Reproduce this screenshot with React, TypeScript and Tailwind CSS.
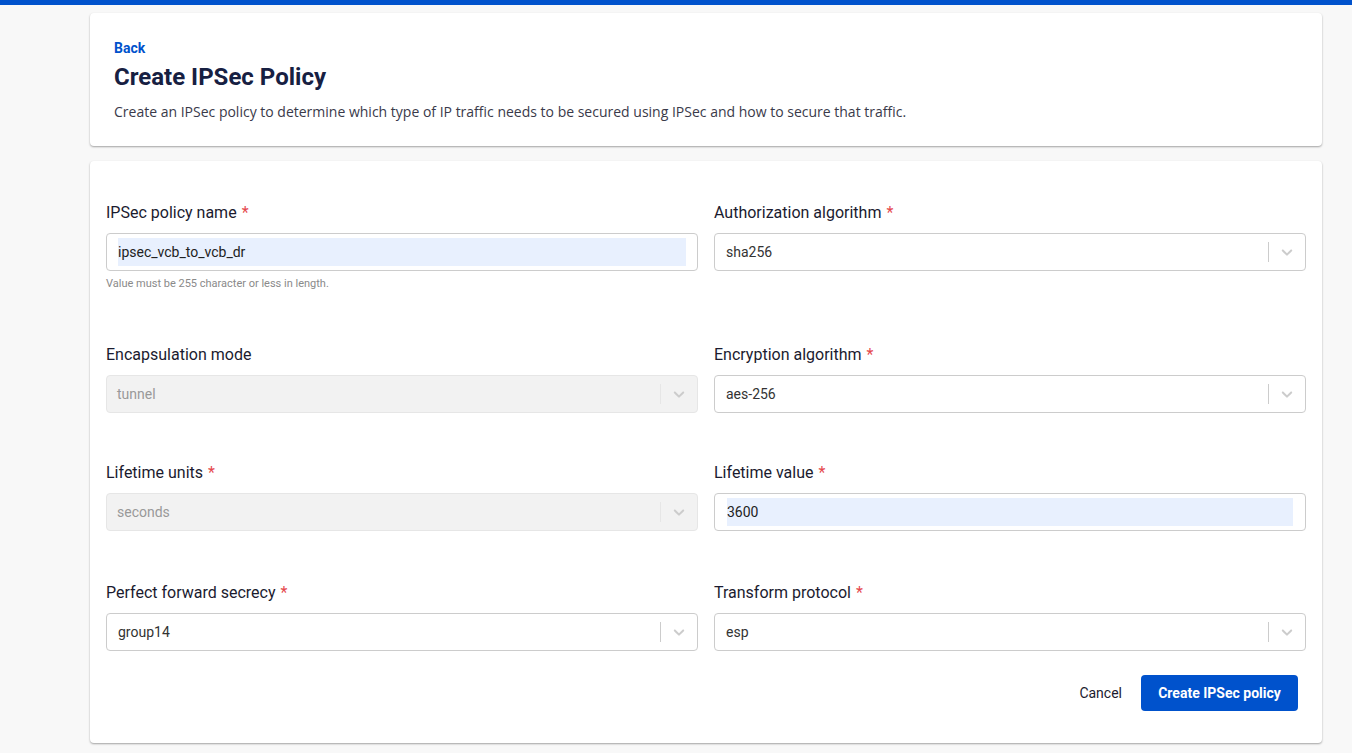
import React from "react";

const font = { roboto: "font-['Roboto','Liberation_Sans',sans-serif]" };

function Chevron() {
  return (
    <svg viewBox="0 0 20 20" className="h-[18px] w-[18px]" fill="#cccccc">
      <path d="M4.516 7.548c.436-.446 1.043-.481 1.576 0L10 11.295l3.908-3.747c.533-.481 1.141-.446 1.574 0 .436.445.408 1.197 0 1.615-.406.418-4.695 4.502-4.695 4.502a1.095 1.095 0 0 1-1.576 0S4.924 9.581 4.516 9.163c-.409-.418-.436-1.17 0-1.615z" />
    </svg>
  );
}

function Label({ text, required }: { text: string; required?: boolean }) {
  return (
    <div className="mb-[10px] h-[20px] text-[16px] leading-[20px] text-[#1b1b2f]">
      {text}
      {required && <span className="ml-[5px] text-[#e5484d]">*</span>}
    </div>
  );
}

function Select({ value, disabled }: { value: string; disabled?: boolean }) {
  return (
    <div
      className={
        disabled
          ? "flex h-[38px] items-center rounded-[4px] border border-[#e6e6e6] bg-[#f2f2f2]"
          : "flex h-[38px] items-center rounded-[4px] border border-[#cccccc] bg-white"
      }
    >
      <span className={disabled ? "flex-1 pl-[10px] text-[14px] text-[#999999]" : "flex-1 pl-[11px] text-[14px] text-[#333333]"}>
        {value}
      </span>
      <span className={disabled ? "h-[20px] w-px bg-[#e6e6e6]" : "h-[20px] w-px bg-[#cccccc]"} />
      <span className="flex w-[36px] items-center justify-center">
        <Chevron />
      </span>
    </div>
  );
}

function TextInput({ value, inset }: { value: string; inset: string }) {
  return (
    <div className={`flex h-[38px] items-stretch rounded-[4px] border border-[#cccccc] bg-white ${inset}`}>
      <div className="flex flex-1 items-center bg-[#e8f0fe] text-[14px] text-[#222222]">{value}</div>
    </div>
  );
}

export default function App() {
  return (
    <div className={`min-h-[753px] bg-[#f8f8f8] ${font.roboto}`}>
      <div className="h-[5px] bg-[#0052cc]" />

      <div className="ml-[90px] mt-[8px] w-[1232px] rounded-[4px] bg-white px-[24px] pb-[24px] pt-[27px] shadow-[0_1px_2px_rgba(0,0,0,0.35)]">
        <a className="block text-[14px] font-bold leading-[16px] text-[#0052cc]">Back</a>
        <h1 className="mt-[6px] text-[24px] font-bold leading-[30px] text-[#172042]">Create IPSec Policy</h1>
        <p className="mt-[10px] font-['Open_Sans',sans-serif] text-[14px] leading-[20px] text-[#3a3a4a]">
          Create an IPSec policy to determine which type of IP traffic needs to be secured using IPSec and how to secure that traffic.
        </p>
      </div>

      <div className="ml-[90px] mt-[15px] w-[1232px] rounded-[4px] bg-white px-[16px] pb-[32px] pt-[42px] shadow-[0_1px_2px_rgba(0,0,0,0.35)]">
        <div className="grid grid-cols-2 gap-x-[16px]">
          {/* row 1 */}
          <div className="pb-[54px]">
            <Label text="IPSec policy name" required />
            <TextInput value="ipsec_vcb_to_vcb_dr" inset="px-[11px] py-[4px]" />
            <div className="mt-[6px] text-[11px] leading-[14px] text-[#8a8a8a]">Value must be 255 character or less in length.</div>
          </div>
          <div>
            <Label text="Authorization algorithm" required />
            <Select value="sha256" />
          </div>

          {/* row 2 */}
          <div className="pb-[50px]">
            <Label text="Encapsulation mode" />
            <Select value="tunnel" disabled />
          </div>
          <div>
            <Label text="Encryption algorithm" required />
            <Select value="aes-256" />
          </div>

          {/* row 3 */}
          <div className="pb-[52px]">
            <Label text="Lifetime units" required />
            <Select value="seconds" disabled />
          </div>
          <div>
            <Label text="Lifetime value" required />
            <TextInput value="3600" inset="px-[12px] py-[4px]" />
          </div>

          {/* row 4 */}
          <div>
            <Label text="Perfect forward secrecy" required />
            <Select value="group14" />
          </div>
          <div>
            <Label text="Transform protocol" required />
            <Select value="esp" />
          </div>
        </div>

        <div className="mt-[24px] flex items-center justify-end gap-[3px] pr-[8px]">
          <button className="h-[36px] px-[16px] text-[14px] text-[#1b1b2f]">Cancel</button>
          <button className="h-[36px] w-[157px] rounded-[4px] bg-[#0052cc] text-[14px] font-bold text-white">
            Create IPSec policy
          </button>
        </div>
      </div>
    </div>
  );
}
